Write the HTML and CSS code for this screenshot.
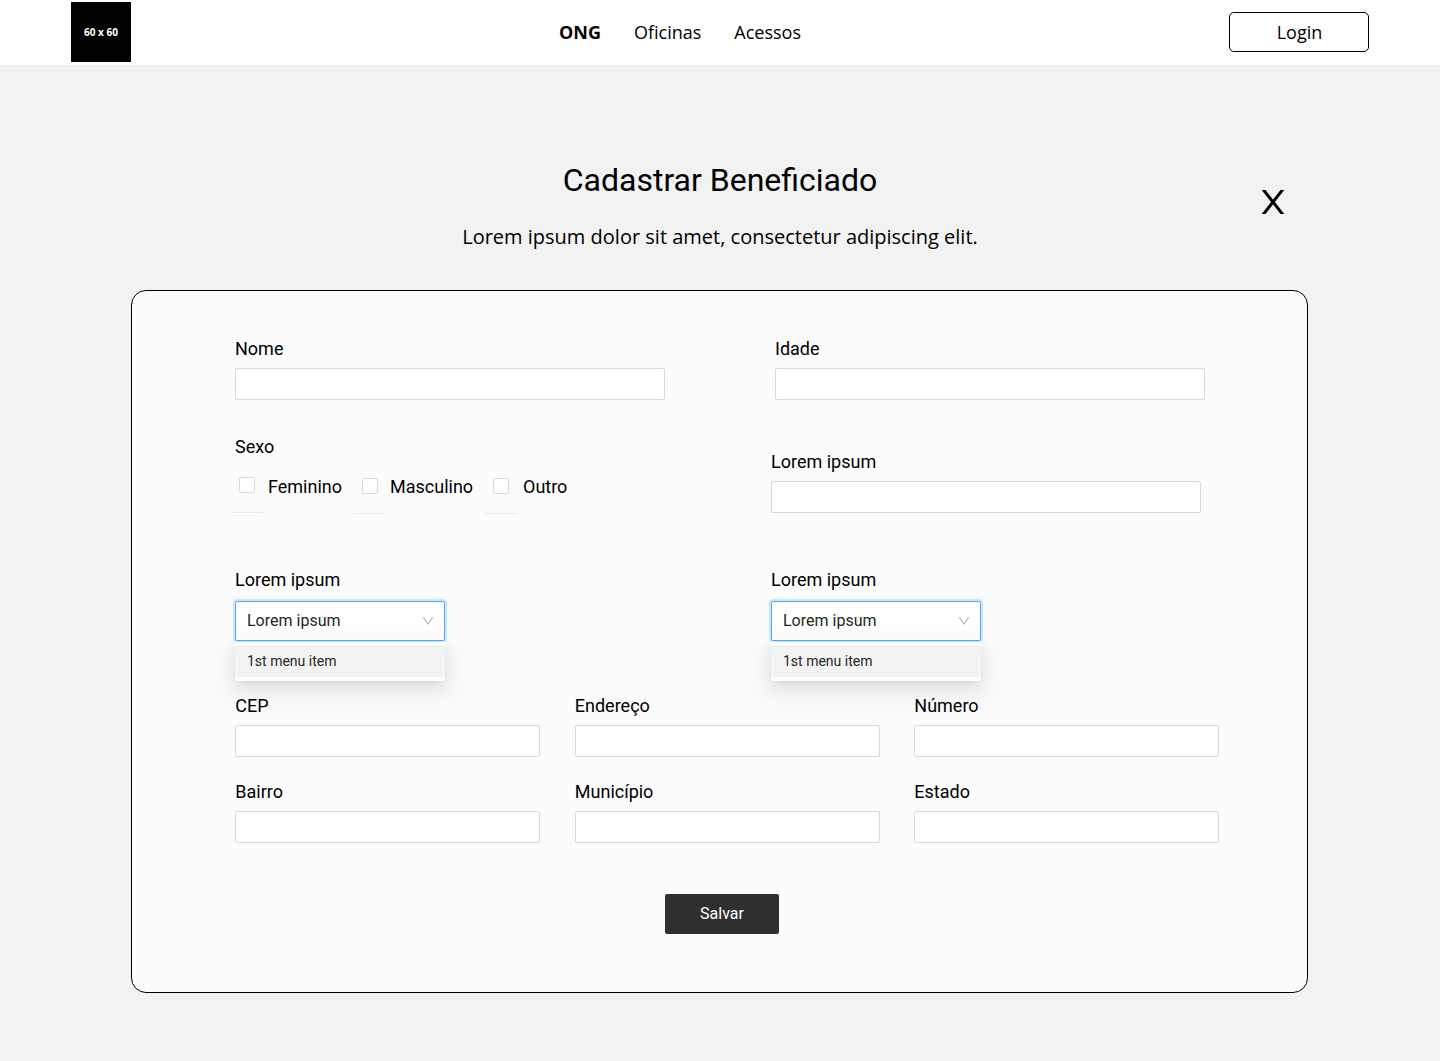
FILE: index.html
```html
<!DOCTYPE html>
<html lang="pt-BR">
<head>
<meta charset="utf-8">
<title>Cadastrar Beneficiado</title>
<link rel="stylesheet" href="styles.css">
</head>
<body>
<header class="topbar">
  <div class="logo">60 x 60</div>
  <nav class="nav">
    <a class="nav-link active">ONG</a>
    <a class="nav-link">Oficinas</a>
    <a class="nav-link">Acessos</a>
  </nav>
  <button class="login">Login</button>
</header>
<main class="page">
  <div class="heading">
    <div class="heading-text">
      <h1 class="title">Cadastrar Beneficiado</h1>
      <p class="subtitle">Lorem ipsum dolor sit amet, consectetur adipiscing elit.</p>
    </div>
    <button class="close" aria-label="Fechar">
      <svg width="24" height="24" viewBox="0 0 24 24" fill="none" stroke="#000" stroke-width="3"><path d="M1.8 -1L22.2 25M22.2 -1L1.8 25"/></svg>
    </button>
  </div>
  <form class="card">
    <div class="halves">
      <label class="field"><span class="label">Nome</span><input class="input"></label>
      <label class="field"><span class="label">Idade</span><input class="input"></label>
    </div>
    <div class="halves halves-second">
      <div class="sex">
        <span class="label">Sexo</span>
        <div class="options">
          <label class="option first"><span class="box-cell"><input type="checkbox" class="box"></span><span>Feminino</span></label>
          <label class="option second"><span class="box-cell"><input type="checkbox" class="box"></span><span>Masculino</span></label>
          <label class="option third"><span class="box-cell"><input type="checkbox" class="box"></span><span>Outro</span></label>
        </div>
      </div>
      <label class="field lowered"><span class="label">Lorem ipsum</span><input class="input"></label>
    </div>
    <div class="halves halves-selects">
      <div class="field">
        <span class="label">Lorem ipsum</span>
        <div class="select">
          <span>Lorem ipsum</span>
          <svg width="12" height="10" viewBox="0 0 12 10" fill="none" stroke="#b5b5b5" stroke-width="1.1"><path d="M1.2 1.2L6 8L10.8 1.2"/></svg>
          <div class="menu"><div class="menu-item">1st menu item</div></div>
        </div>
      </div>
      <div class="field">
        <span class="label">Lorem ipsum</span>
        <div class="select">
          <span>Lorem ipsum</span>
          <svg width="12" height="10" viewBox="0 0 12 10" fill="none" stroke="#b5b5b5" stroke-width="1.1"><path d="M1.2 1.2L6 8L10.8 1.2"/></svg>
          <div class="menu"><div class="menu-item">1st menu item</div></div>
        </div>
      </div>
    </div>
    <div class="thirds">
      <label class="field"><span class="label">CEP</span><input class="input"></label>
      <label class="field"><span class="label">Endereço</span><input class="input"></label>
      <label class="field"><span class="label">Número</span><input class="input"></label>
      <label class="field"><span class="label">Bairro</span><input class="input"></label>
      <label class="field"><span class="label">Município</span><input class="input"></label>
      <label class="field"><span class="label">Estado</span><input class="input"></label>
    </div>
    <button type="button" class="save">Salvar</button>
  </form>
</main>
</body>
</html>
```
FILE: styles.css
```css
* { box-sizing: border-box; }
body {
  margin: 0;
  min-height: 1061px;
  background: #f2f2f2;
  color: #000;
  font-family: Roboto, sans-serif;
}
.topbar {
  display: flex;
  justify-content: space-between;
  align-items: center;
  height: 65px;
  padding: 0 71px 1px;
  background: #fff;
  font-family: "Open Sans", sans-serif;
}
.logo {
  display: flex;
  align-items: center;
  justify-content: center;
  width: 60px;
  height: 60px;
  background: #000;
  color: #fff;
  font-size: 10px;
  font-weight: 700;
}
.nav { display: flex; gap: 33px; }
.nav-link { font-size: 18px; line-height: 26px; }
.active { font-weight: 700; }
.login {
  width: 140px;
  height: 40px;
  padding: 0 0 0 1px;
  border: 1px solid #000;
  border-radius: 5px;
  background: #fff;
  color: #000;
  font: 18px/26px "Open Sans", sans-serif;
}
.page { width: 1177px; margin-left: 131px; }
.heading {
  display: grid;
  grid-template-columns: 61px 1fr 60px;
  height: 225px;
  padding-top: 95px;
}
.heading-text { grid-column: 2; text-align: center; }
.title { margin: 0; font-size: 32px; font-weight: 400; line-height: 40px; }
.subtitle { margin: 23px 0 0; font: 20px/28px "Open Sans", sans-serif; }
.close {
  align-self: start;
  margin: 30px 0 0 13px;
  width: 24px;
  height: 24px;
  padding: 0;
  border: 0;
  background: none;
}
.close svg { display: block; }
.card {
  height: 703px;
  padding: 44px 88px 0 103px;
  border: 1px solid #000;
  border-radius: 15px;
  background: #fcfcfc;
}
.halves { display: grid; grid-template-columns: 430px 430px; column-gap: 110px; height: 98px; }
.halves-second { column-gap: 106px; height: 133px; }
.halves-selects { column-gap: 106px; height: 126px; }
.field { display: flex; flex-direction: column; gap: 5px; }
.lowered { padding-top: 15px; }
.label { font-size: 18px; line-height: 28px; }
.input {
  width: 100%;
  height: 32px;
  border: 1px solid #d9d9d9;
  border-radius: 2px;
  background: #fff;
  outline: none;
}
.sex { display: flex; flex-direction: column; }
.options { display: flex; margin-left: -3px; font-size: 18px; line-height: 28px; }
.option { display: flex; align-items: flex-start; padding-top: 12px; }
.box-cell {
  display: flex;
  justify-content: center;
  width: 31px;
  height: 40px;
  margin-right: 5px;
  padding-top: 4px;
  border-bottom: 1px solid #ebebeb;
}
.first { width: 122px; }
.second { width: 131px; }
.first .box-cell { padding-right: 1px; }
.second .box-cell, .third .box-cell { width: 32px; height: 41px; padding-top: 5px; }
.second .box-cell { margin-right: 4px; }
.third .box-cell { margin-right: 6px; }
.box {
  appearance: none;
  width: 16px;
  height: 16px;
  margin: 0;
  border: 1px solid #d9d9d9;
  border-radius: 2px;
  background: #fff;
}
.select {
  position: relative;
  display: flex;
  align-items: center;
  justify-content: space-between;
  width: 210px;
  height: 40px;
  margin-top: 2px;
  padding: 0 10px 2px 11px;
  border: 1px solid #40a9ff;
  border-radius: 2px;
  background: linear-gradient(#fff 50%, #fafafa);
  box-shadow: 0 0 0 2px rgba(24, 144, 255, .2);
  color: #262626;
  font-size: 16px;
}
.select svg { margin-top: 2px; }
.menu {
  position: absolute;
  top: 38px;
  left: -1px;
  width: 210px;
  height: 41px;
  padding: 5px 0 4px;
  border-radius: 2px;
  background: #fff;
  clip-path: inset(2px -45px -50px -45px);
  box-shadow: 0 3px 6px -4px rgba(0, 0, 0, .12), 0 6px 16px rgba(0, 0, 0, .08), 0 9px 28px 8px rgba(0, 0, 0, .05);
}
.menu-item { height: 32px; padding-left: 12px; background: #f3f3f3; font-size: 14px; line-height: 32px; }
.thirds {
  position: relative;
  display: grid;
  grid-template-columns: repeat(3, 305px);
  column-gap: 34.5px;
  row-gap: 21px;
  padding-left: .3px;
}
.save {
  display: block;
  width: 114px;
  height: 40px;
  margin: 51px 0 0 430px;
  padding: 0 0 1px;
  border: 0;
  border-radius: 2px;
  background: #2f2f2f;
  color: #fff;
  font: 16px/25px Roboto, sans-serif;
}
```
